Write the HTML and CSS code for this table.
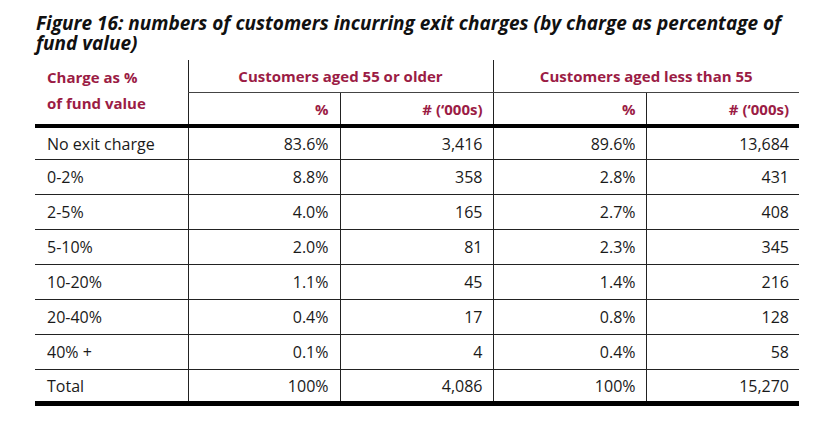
FILE: index.html
```html
<!DOCTYPE html>
<html>
<head>
<meta charset="utf-8">
<link rel="stylesheet" href="styles.css">
</head>
<body>
<div class="figure">
  <h1 class="title">Figure 16: numbers of customers incurring exit charges (by charge as percentage of fund value)</h1>
  <table class="data">
    <colgroup>
      <col class="c1"><col class="c2"><col class="c3"><col class="c4"><col class="c5">
    </colgroup>
    <thead>
      <tr class="h1">
        <th class="label" rowspan="2">Charge as %<br>of fund value</th>
        <th class="group" colspan="2">Customers aged 55 or older</th>
        <th class="group" colspan="2">Customers aged less than 55</th>
      </tr>
      <tr class="h2">
        <th class="num">%</th>
        <th class="num">#&nbsp;(‘000s)</th>
        <th class="num">%</th>
        <th class="num">#&nbsp;(‘000s)</th>
      </tr>
    </thead>
    <tbody>
      <tr><td>No exit charge</td><td class="num">83.6%</td><td class="num">3,416</td><td class="num">89.6%</td><td class="num">13,684</td></tr>
      <tr><td>0-2%</td><td class="num">8.8%</td><td class="num">358</td><td class="num">2.8%</td><td class="num">431</td></tr>
      <tr><td>2-5%</td><td class="num">4.0%</td><td class="num">165</td><td class="num">2.7%</td><td class="num">408</td></tr>
      <tr><td>5-10%</td><td class="num">2.0%</td><td class="num">81</td><td class="num">2.3%</td><td class="num">345</td></tr>
      <tr><td>10-20%</td><td class="num">1.1%</td><td class="num">45</td><td class="num">1.4%</td><td class="num">216</td></tr>
      <tr><td>20-40%</td><td class="num">0.4%</td><td class="num">17</td><td class="num">0.8%</td><td class="num">128</td></tr>
      <tr><td>40% +</td><td class="num">0.1%</td><td class="num">4</td><td class="num">0.4%</td><td class="num">58</td></tr>
      <tr class="total"><td>Total</td><td class="num">100%</td><td class="num">4,086</td><td class="num">100%</td><td class="num">15,270</td></tr>
    </tbody>
  </table>
</div>
</body>
</html>
```

FILE: styles.css
```css
html, body {
  margin: 0;
  padding: 0;
  background: #ffffff;
}

body {
  font-family: "Open Sans", "Noto Sans", sans-serif;
  color: #1a1a1a;
}

.figure {
  padding: 13px 0 0 35px;
  width: 764px;
}

.title {
  margin: 0 0 0 1px;
  width: 780px;
  font-size: 19px;
  line-height: 20px;
  font-weight: 700;
  font-style: italic;
  color: #111;
}

.data {
  margin-top: 7px;
  width: 764px;
  border-collapse: collapse;
  table-layout: fixed;
  font-size: 16px;
}

.c1 { width: 153px; }
.c2 { width: 152px; }
.c3 { width: 153px; }
.c4 { width: 153px; }
.c5 { width: 153px; }

.data th {
  font-size: 15px;
  font-weight: 700;
  color: #9b1c45;
  padding: 0;
}

.data th + th,
.data td + td {
  border-left: 1px solid #222;
}

.h2 th {
  border-left: 1px solid #222;
}

.h1 th {
  height: 32px;
  vertical-align: middle;
}

.h1 .group {
  border-bottom: 1px solid #444;
  text-align: center;
}

.h1 .label {
  text-align: left;
  vertical-align: top;
  padding: 4px 0 0 12px;
  line-height: 26px;
}

.h2 th {
  height: 31px;
  vertical-align: middle;
  border-bottom: 4px solid #000;
}

.h1 .label {
  border-bottom: 4px solid #000;
}

.data .num {
  text-align: right;
  padding-right: 10px;
}

.data td {
  height: 34px;
  padding: 0 0 0 12px;
  vertical-align: middle;
  border-bottom: 1px solid #222;
  color: #1a1a1a;
}

.data td.num {
  padding-left: 0;
  padding-right: 10px;
}

.data td:nth-child(2),
.data th.num:nth-child(1) {
  padding-right: 11px;
}

.data tbody tr:first-child td {
  height: 31px;
}

.data .total td {
  height: 31px;
  border-bottom: 5px solid #000;
}
```
